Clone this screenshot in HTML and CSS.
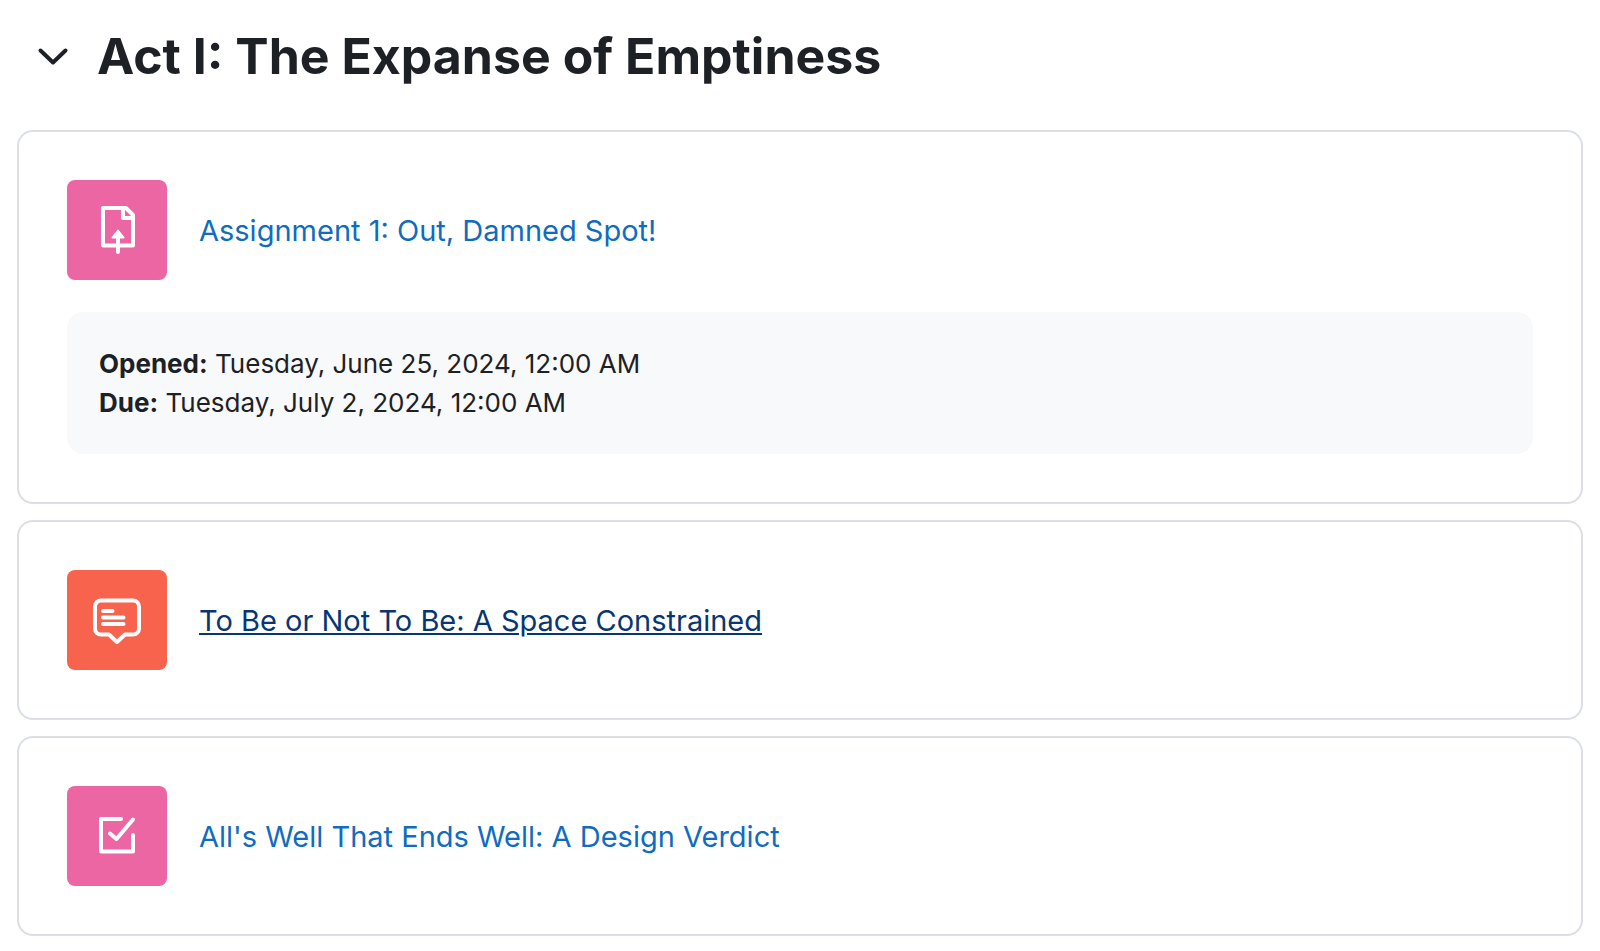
FILE: index.html
```html
<!DOCTYPE html>
<html lang="en">
<head>
    <meta charset="UTF-8">
    <meta name="viewport" content="width=device-width, initial-scale=1.0">
    <title>Act I: The Expanse of Emptiness</title>
    <link rel="stylesheet" href="styles.css">
</head>
<body>
    <main class="section">
        <div class="section-header">
            <button class="toggle" type="button" aria-label="Collapse" aria-expanded="true">
                <svg width="32" height="32" viewBox="0 0 32 32"><path d="M3.5 10.5l12.500 12 12.500-12"/></svg>
            </button>
            <h1>Act I: The Expanse of Emptiness</h1>
        </div>

        <ul class="activities">
            <li class="activity">
                <div class="activity-name">
                    <span class="icon assessment">
                        <!-- page with an arrow -->
                        <svg width="48" height="48" viewBox="0 0 48 48">
                            <path d="M10 2h23l7 7v30.500H10z"/>
                            <path d="M30 2v10h10"/>
                            <path d="M25 46V31"/>
                            <path class="fill" d="M25 24.500l5.500 7h-11z"/>
                        </svg>
                    </span>
                    <a href="#">Assignment 1: Out, Damned Spot!</a>
                </div>
                <div class="dates">
                    <div><strong>Opened:</strong> Tuesday, June 25, 2024, 12:00 AM</div>
                    <div><strong>Due:</strong> Tuesday, July 2, 2024, 12:00 AM</div>
                </div>
            </li>

            <li class="activity">
                <div class="activity-name">
                    <span class="icon communication">
                        <!-- speech bubble -->
                        <svg width="48" height="48" viewBox="0 0 48 48">
                            <path d="M8 4.500h32a6 6 0 0 1 6 6v22a6 6 0 0 1-6 6h-8L24 46l-8-7.500H8a6 6 0 0 1-6-6v-22a6 6 0 0 1 6-6z"/>
                            <path d="M10 15h9.500M10 21.500h20.500M10 28h20.500"/>
                        </svg>
                    </span>
                    <a class="active" href="#">To Be or Not To Be: A Space Constrained</a>
                </div>
            </li>

            <li class="activity">
                <div class="activity-name">
                    <span class="icon assessment">
                        <!-- ticked box -->
                        <svg width="48" height="48" viewBox="0 0 48 48">
                            <path d="M28 7H8v32.500h32V23"/>
                            <path d="M17 21.500l6.500 5.500L40 7.500"/>
                        </svg>
                    </span>
                    <a href="#">All's Well That Ends Well: A Design Verdict</a>
                </div>
            </li>
        </ul>
    </main>
</body>
</html>
```
FILE: styles.css
```css
*{
    padding: 0;
    margin: 0;
    box-sizing: border-box;
}

body{
    font-family: Inter, "Liberation Sans", sans-serif;
    font-size: 26px;
    color: #1d2125;
    background-color: #fff;
}

.section{
    padding: 24px 17px 15px;
}

.section-header{
    display: flex;
    align-items: center;
    gap: 28px;
    height: 64px;
    margin-bottom: 42px;
    padding-left: 20px;
}

.toggle{
    width: 32px;
    height: 32px;
    border: none;
    color: #1d2125;
    background: none;
    cursor: pointer;
}

h1{
    font-size: 50px;
    font-weight: 700;
    line-height: 64px;
}

svg{
    display: block;
    overflow: visible;
    fill: none;
    stroke: currentColor;
    stroke-width: 4px;
    stroke-linecap: round;
    stroke-linejoin: round;
}

.activities{
    display: flex;
    flex-direction: column;
    gap: 16px;
    list-style: none;
}

.activity{
    border: 2px solid #dbdfe4;
    border-radius: 16px;
    padding: 48px;
}

.activity-name{
    display: flex;
    align-items: center;
    gap: 32px;
}

.icon{
    display: flex;
    flex: none;
    justify-content: center;
    align-items: center;
    width: 100px;
    height: 100px;
    border-radius: 8px;
    color: #fff;
}

.icon .fill{
    fill: currentColor;
    stroke-width: 2px;
}

.assessment{
    background-color: #eb66a2;
}

.communication{
    background-color: #f7634d;
}

a{
    font-size: 29px;
    text-decoration: none;
    color: #0f6cbf;
}

a:hover, a.active{
    color: #083672;
    text-decoration: underline;
}

.dates{
    margin-top: 32px;
    border-radius: 16px;
    padding: 32px;
    line-height: 39px;
    background-color: #f8f9fb;
}
```
